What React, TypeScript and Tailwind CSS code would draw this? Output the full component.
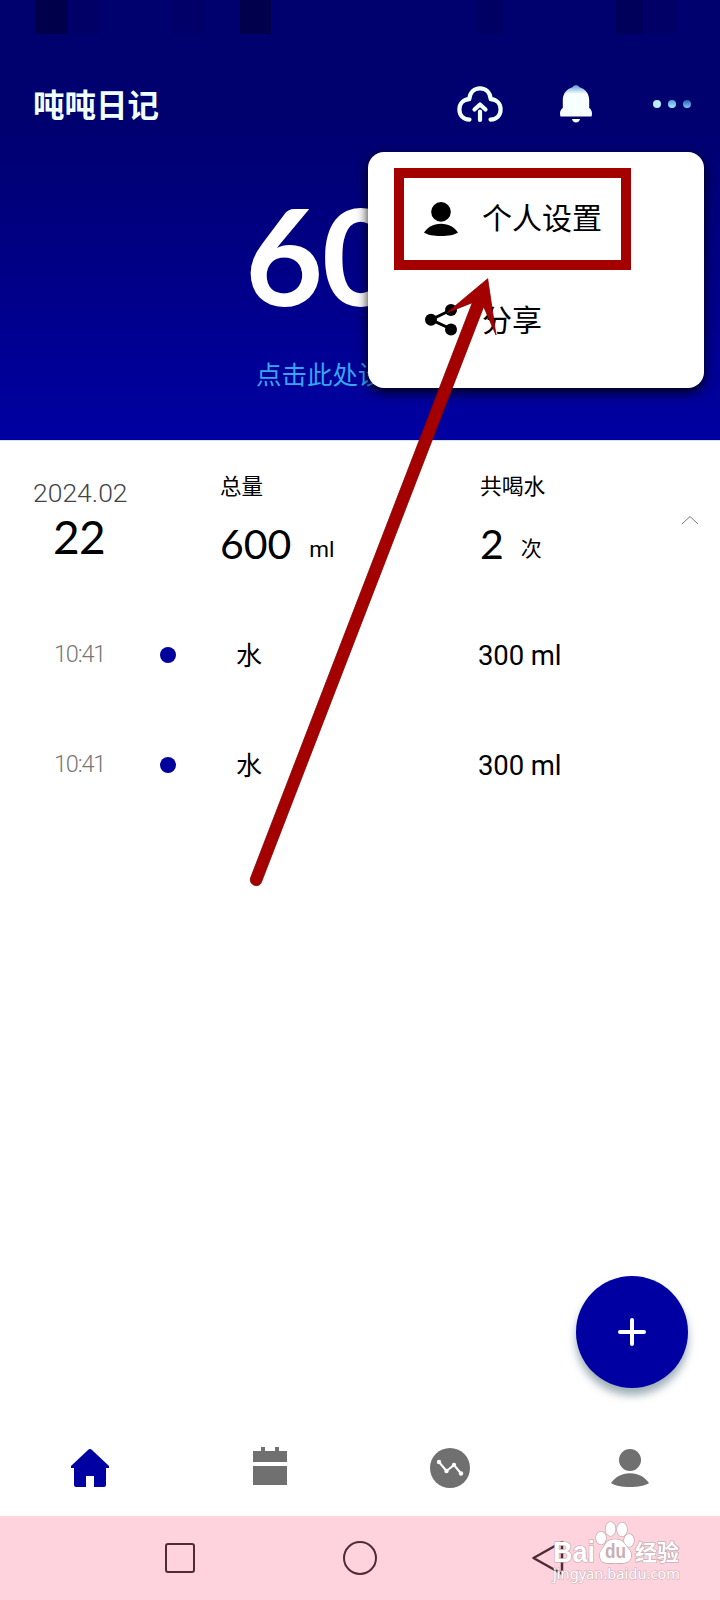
import React from "react";

const records = [
  { time: "10:41", name: "水", amount: "300 ml" },
  { time: "10:41", name: "水", amount: "300 ml" },
];

const UserIcon = ({ className }: { className: string }) => (
  <svg viewBox="0 0 38 38" className={className} fill="currentColor">
    <circle cx="19" cy="11" r="11" />
    <path d="M0 34C4 28.5 10 24.2 19 24.2S34 28.5 38 34C31 39.3 7 39.3 0 34Z" />
  </svg>
);

const StatusBar = () => (
  <div className="flex h-[34px] pl-[35px]">
    <span className="w-[33px] bg-[#00004a]" />
    <span className="ml-1 w-[28px] bg-[#000066]" />
    <span className="ml-[72px] w-[33px] bg-[#000068]" />
    <span className="ml-[35px] w-[31px] bg-[#00004d]" />
    <span className="ml-[206px] w-[26px] bg-[#000062]" />
    <span className="ml-[112px] w-[28px] bg-[#00005a]" />
    <span className="w-[34px] bg-[#000066]" />
  </div>
);

const Header = () => (
  <header className="relative h-[440px] overflow-hidden bg-linear-to-b from-[#00006e] from-25% to-[#0000a2]">
    <StatusBar />
    <div className="mt-[44px] flex h-[52px] items-center pl-[33px] text-white">
      <h1 className="-mt-px w-[423px] text-[31.5px] leading-none font-bold text-[#f2ffff]">
        吨吨日记
      </h1>
      <svg
        viewBox="0 0 48 38"
        className="h-[38px] w-[48px]"
        fill="none"
        stroke="#f2ffff"
        strokeWidth="4.2"
        strokeLinecap="round"
        strokeLinejoin="round"
      >
        <path d="M13.5 34.6C7 34.6 3.4 30 3.4 24.5C3.4 18.5 7.5 14.6 13.3 14.2C13.8 7.5 18 3.4 24 3.4S34.2 7.5 34.7 14.2C40.5 14.6 44.6 18.5 44.6 24.5C44.6 30 41 34.6 34.5 34.6" />
        <path d="M24 35V26.5M18.5 24.5 24 19.5l5.5 5" />
      </svg>
      <svg viewBox="0 0 32 38" className="ml-[56px] h-[38px] w-[32px]">
        <defs>
          <linearGradient id="bell" x1="0" y1="0" x2="0" y2="1">
            <stop offset="0" stopColor="#5d9bd5" />
            <stop offset=".28" stopColor="#f8ffff" />
          </linearGradient>
        </defs>
        <path
          fill="url(#bell)"
          d="M13 2C13-.5 19-.5 19 2C26 4 29 9 29.2 15V23C32 25 32.5 28 31.5 31.5H.5C-.5 28 0 25 2.8 23V15C3 9 6 4 13 2Z"
        />
        <path fill="#f8ffff" d="M12 34H20C19 38.7 13 38.7 12 34Z" />
      </svg>
      <div className="ml-[61px] flex gap-[7px]">
        <span className="size-2 rounded-full bg-[#b9eeff]" />
        <span className="size-2 rounded-full bg-linear-to-b from-[#4c9ddc] to-[#b0e8ff]" />
        <span className="size-2 rounded-full bg-linear-to-b from-[#2160b0] to-[#88c8f4]" />
      </div>
    </div>
    <p className="mt-[54px] pl-[245px] font-['Lato'] text-[135px] leading-[140px] font-bold tracking-[-1.5px] text-white">
      600
    </p>
    <p className="mt-[34px] pl-[256px] text-[25.5px] leading-[30px] text-[#37a5f4]">
      点击此处设置
    </p>
  </header>
);

const Menu = () => (
  <div className="absolute top-[152px] left-[368px] h-[236px] w-[336px] rounded-2xl bg-white shadow-[0_4px_12px_rgba(0,0,0,0.9)]">
    <div className="mt-4 ml-[26px] flex h-[102px] w-[237px] items-center border-[10.5px] border-[#a50000] pl-[20px]">
      <UserIcon className="size-[34px]" />
      <span className="-mt-[6px] ml-[24px] text-[30px] leading-9">个人设置</span>
    </div>
    <div className="mt-[32px] ml-[56px] flex h-[36px] items-center">
      <svg viewBox="0 0 34 34" className="size-[34px]">
        <path d="M27 7 7 16.7 27 26" fill="none" stroke="#000" strokeWidth="3" />
        <circle cx="27" cy="7" r="6" />
        <circle cx="7" cy="16.7" r="6" />
        <circle cx="27" cy="26.5" r="6" />
      </svg>
      <span className="-mt-1 ml-[24px] text-[30px] leading-9">分享</span>
    </div>
  </div>
);

const Summary = () => (
  <section className="flex h-[160px] border-t border-[#cfe2ff]">
    <div className="w-[188px] pt-[36px] pl-[33px]">
      <p className="font-['Roboto'] text-[26.5px] leading-8 font-light text-[#444]">
        2024.02
      </p>
      <p className="pl-5 font-['Lato'] text-[46px] leading-[56px] tracking-[-0.8px]">22</p>
    </div>
    <div className="w-[260px] pt-[28px] pl-[32px]">
      <p className="text-[21.5px] leading-8">总量</p>
      <div className="mt-[15px] flex items-baseline leading-[56px]">
        <span className="font-['Lato'] text-[41px]">600</span>
        <span className="relative -top-[2px] ml-[18px] font-['Roboto'] text-[22.5px]">ml</span>
      </div>
    </div>
    <div className="w-[230px] pt-[28px] pl-[32px]">
      <p className="text-[21.8px] leading-8">共喝水</p>
      <div className="mt-[15px] flex items-baseline leading-[56px]">
        <span className="font-['Lato'] text-[41px]">2</span>
        <span className="relative -top-[3px] ml-[17px] text-[21px] leading-none">次</span>
      </div>
    </div>
    <svg
      viewBox="0 0 24 12"
      className="mt-[73px] h-[12px] w-[24px]"
      fill="none"
      stroke="#777"
      strokeWidth="1"
    >
      <path d="m4 10 8-7.5 8 7.5" />
    </svg>
  </section>
);

const TabBar = () => (
  <nav className="grid h-[96px] grid-cols-4 place-items-center text-[#707070]">
    <svg viewBox="0 0 38 38" className="size-[38px]" fill="#0000a2">
      <path d="M17 1Q19-.8 21 1L38 17V19H35V36Q35 38 33 38H23V27H15V38H5Q3 38 3 36V19H0V17Z" />
    </svg>
    <svg viewBox="0 0 34 38" className="mb-1 h-[38px] w-[34px]" fill="currentColor">
      <path d="M0 4H8V0H12V4H22V0H26V4H34V15H0ZM0 19H34V38H0Z" />
    </svg>
    <svg viewBox="0 0 40 40" className="size-[40px]">
      <circle cx="20" cy="20" r="20" fill="currentColor" />
      <g fill="#fff">
        <path d="m9 14 7.5 9L24 17l7 8.5" fill="none" stroke="#fff" strokeWidth="2" />
        <circle cx="9" cy="14" r="2.2" />
        <circle cx="16.5" cy="23" r="2.2" />
        <circle cx="24" cy="17" r="2.2" />
        <circle cx="31" cy="25.5" r="2.2" />
      </g>
    </svg>
    <UserIcon className="size-[38px]" />
  </nav>
);

const Watermark = () => (
  <svg
    viewBox="0 0 140 76"
    className="absolute top-[1518px] left-[548px] h-[76px] w-[140px]"
    fill="#fff"
    stroke="#b9a0a8"
    strokeWidth="1.2"
    paintOrder="stroke"
  >
    <text x="5" y="44" fontSize="29" fontWeight="700" fontFamily="Liberation Sans" textLength="42" lengthAdjust="spacingAndGlyphs">
      Bai
    </text>
    <ellipse cx="53" cy="20" rx="5" ry="6.5" />
    <ellipse cx="62.5" cy="11" rx="5" ry="7" />
    <ellipse cx="74" cy="11.5" rx="5" ry="7" />
    <ellipse cx="81" cy="22.5" rx="5" ry="6.5" />
    <path d="M58 25C62 20 72 20 76 25C80 31 84 32 83 39C82 46 76 45 67 45S53 46 52 39C51 32 55 31 58 25Z" />
    <text x="57" y="40" fontSize="20" fontWeight="700" fontFamily="Liberation Sans" fill="#c9adb5" stroke="none" textLength="21" lengthAdjust="spacingAndGlyphs">
      du
    </text>
    <text x="87" y="42" fontSize="22" fontWeight="700" fontFamily="Noto Sans CJK SC">
      经验
    </text>
    <text x="5" y="61" fontSize="15" fontFamily="Noto Sans" stroke="#cdb0b9" textLength="127" lengthAdjust="spacingAndGlyphs">
      jingyan.baidu.com
    </text>
  </svg>
);

const App = () => {
  return (
    <main className="relative flex h-[1600px] w-[720px] flex-col overflow-hidden bg-white font-['Noto_Sans_CJK_SC',sans-serif] text-black">
      <Header />
      <Summary />
      <ul>
        {records.map((item, i) => (
          <li key={i} className="flex h-[110px] items-center pl-[54px]">
            <span className="w-[106px] font-['Roboto'] text-[23.5px] font-light tracking-[-1.2px] text-[#777]">
              {item.time}
            </span>
            <span className="size-4 rounded-full bg-[#00009c]" />
            <span className="-mt-[3px] ml-[60px] w-[242px] text-[26px] leading-8">
              {item.name}
            </span>
            <span className="mt-[2px] font-['Roboto'] text-[27.5px] tracking-[-0.1px]">
              {item.amount}
            </span>
          </li>
        ))}
      </ul>
      <div className="flex-1" />
      <TabBar />
      <footer className="h-[84px] bg-[#fed3dd] pl-[90px]">
        <div className="grid h-full w-[540px] grid-cols-3 place-items-center">
          <span className="size-[30px] rounded-[3px] border-[2.5px] border-[#4e2c33]" />
          <span className="size-[34px] rounded-full border-[2.5px] border-[#4e2c33]" />
          <svg
            viewBox="0 0 32 36"
            className="ml-[15px] h-[36px] w-[32px]"
            fill="none"
            stroke="#4e2c33"
            strokeWidth="2.5"
            strokeLinejoin="round"
          >
            <path d="M30 2V34L1.5 18Z" />
          </svg>
        </div>
      </footer>

      <Menu />
      <button className="absolute top-[1276px] left-[576px] flex size-[112px] items-center justify-center rounded-full bg-[#0000a2] shadow-[0_7px_9px_rgba(60,90,110,0.5)]">
        <svg viewBox="0 0 28 28" className="size-[28px]" stroke="#fff" strokeWidth="4" strokeLinecap="round">
          <path d="M14 2V26M2 14H26" />
        </svg>
      </button>
      <svg viewBox="0 0 260 620" className="absolute top-[270px] left-[245px] h-[620px] w-[260px]" fill="#a50000">
        <path
          d="M242.7 8.7 202 42.7 227.3 32.7 5.5 608C3.5 615 14 619 16.5 612L238.7 36.7 251 65Z"
          stroke="#850000"
          strokeWidth=".8"
        />
      </svg>
      <Watermark />
    </main>
  );
};

export default App;
